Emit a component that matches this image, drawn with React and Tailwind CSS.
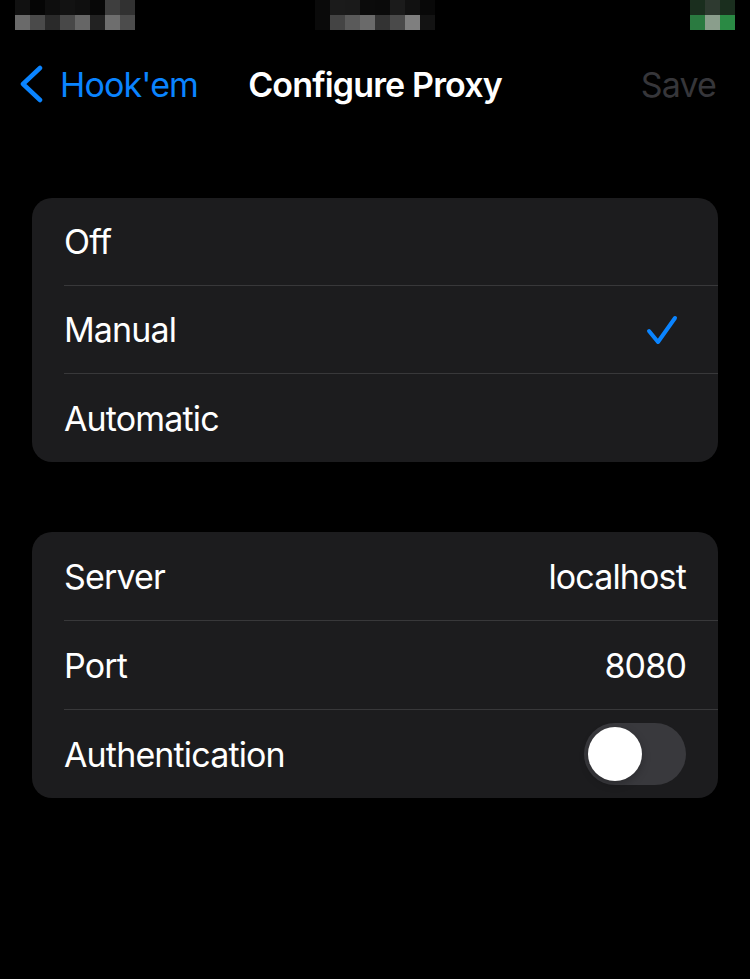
import { useState } from 'react'

// blurred status bar, drawn as pixel blocks
const LEFT_TOP = ['bg-[#111111]', 'bg-[#050505]', 'bg-[#0e0e0e]', 'bg-[#121212]', 'bg-[#0f0f0f]', 'bg-[#070707]', 'bg-[#3e3e3e]', 'bg-[#313131]']
const LEFT_BOT = ['bg-[#6a6a6a]', 'bg-[#4a4a4a]', 'bg-[#2a2a2a]', 'bg-[#484848]', 'bg-[#666666]', 'bg-[#222222]', 'bg-[#6e6e6e]', 'bg-[#4c4c4c]']
const MID_TOP = ['bg-[#0a0a0a]', 'bg-[#1b1b1b]', 'bg-[#1a1a1a]', 'bg-[#0b0b0b]', 'bg-[#0a0a0a]', 'bg-[#1b1b1b]', 'bg-[#111111]', 'bg-[#080808]']
const MID_BOT = ['bg-[#0a0a0a]', 'bg-[#444444]', 'bg-[#5a5a5a]', 'bg-[#6a6a6a]', 'bg-[#333333]', 'bg-[#4a4a4a]', 'bg-[#7f7f7f]', 'bg-[#131313]']
const RIGHT_TOP = ['bg-[#1a2e1e]', 'bg-[#2e3a30]', 'bg-[#1a2e1e]']
const RIGHT_BOT = ['bg-[#2a7a40]', 'bg-[#8a9e8c]', 'bg-[#2a8a44]']

function Blocks({ top, bot }) {
  return (
    <div className="flex flex-col">
      <div className="flex">{top.map((c, i) => <div key={i} className={`w-[15px] h-[15px] ${c}`} />)}</div>
      <div className="flex">{bot.map((c, i) => <div key={i} className={`w-[15px] h-[15px] ${c}`} />)}</div>
    </div>
  )
}

function Row({ label, right, last, tall }) {
  return (
    <div className={`flex items-stretch pl-[32px] ${tall ? 'h-[89px]' : 'h-[88px]'}`}>
      <div className={`flex-1 flex items-center justify-between pr-[32px] ${last ? '' : 'border-b border-[#38383a]'}`}>
        <span className="text-white">{label}</span>
        {right}
      </div>
    </div>
  )
}

function Check() {
  return (
    <svg width="34" height="34" viewBox="0 0 34 34" className="mr-[7px]">
      <path d="M4 18 L13 29 L30 5" fill="none" stroke="#0a84ff" strokeWidth="4" strokeLinecap="round" strokeLinejoin="round" />
    </svg>
  )
}

function Toggle({ on, onClick }) {
  return (
    <button onClick={onClick} className={`w-[102px] h-[62px] rounded-full p-[4px] flex ${on ? 'bg-[#30d158] justify-end' : 'bg-[#39393d] justify-start'}`}>
      <div className="w-[54px] h-[54px] rounded-full bg-white shadow-[0_3px_8px_rgba(0,0,0,0.25)]" />
    </button>
  )
}

export default function App() {
  const [mode, setMode] = useState('Manual')
  const [auth, setAuth] = useState(false)
  const modes = ['Off', 'Manual', 'Automatic']

  return (
    <div className="w-[750px] h-[979px] bg-black font-['Inter','Noto_Sans',sans-serif] text-[34px] tracking-[-0.85px]">
      <div className="h-[44px] flex">
        <div className="ml-[15px]"><Blocks top={LEFT_TOP} bot={LEFT_BOT} /></div>
        <div className="ml-[180px]"><Blocks top={MID_TOP} bot={MID_BOT} /></div>
        <div className="ml-[255px]"><Blocks top={RIGHT_TOP} bot={RIGHT_BOT} /></div>
      </div>

      <div className="h-[80px] relative flex items-center">
        <div className="flex items-center pl-[18px] text-[#0a84ff]">
          <svg width="28" height="38" viewBox="0 0 28 38">
            <path d="M22 3 L5 19 L22 35" fill="none" stroke="#0a84ff" strokeWidth="4.5" strokeLinecap="round" strokeLinejoin="round" />
          </svg>
          <span className="ml-[14px]">Hook'em</span>
        </div>
        <div className="absolute inset-x-0 text-center font-semibold text-white pointer-events-none">Configure Proxy</div>
        <div className="ml-auto pr-[34px] text-[#36363a]">Save</div>
      </div>

      <div className="mx-[32px] mt-[74px] rounded-[20px] bg-[#1c1c1e] overflow-hidden">
        {modes.map((m, i) => (
          <div key={m} onClick={() => setMode(m)} className="cursor-pointer">
            <Row label={m} last={i === modes.length - 1} right={mode === m ? <Check /> : null} />
          </div>
        ))}
      </div>

      <div className="mx-[32px] mt-[70px] rounded-[20px] bg-[#1c1c1e] overflow-hidden">
        <Row tall label="Server" right={<span className="text-white">localhost</span>} />
        <Row tall label="Port" right={<span className="text-white">8080</span>} />
        <Row label="Authentication" last right={<Toggle on={auth} onClick={() => setAuth(!auth)} />} />
      </div>
    </div>
  )
}
